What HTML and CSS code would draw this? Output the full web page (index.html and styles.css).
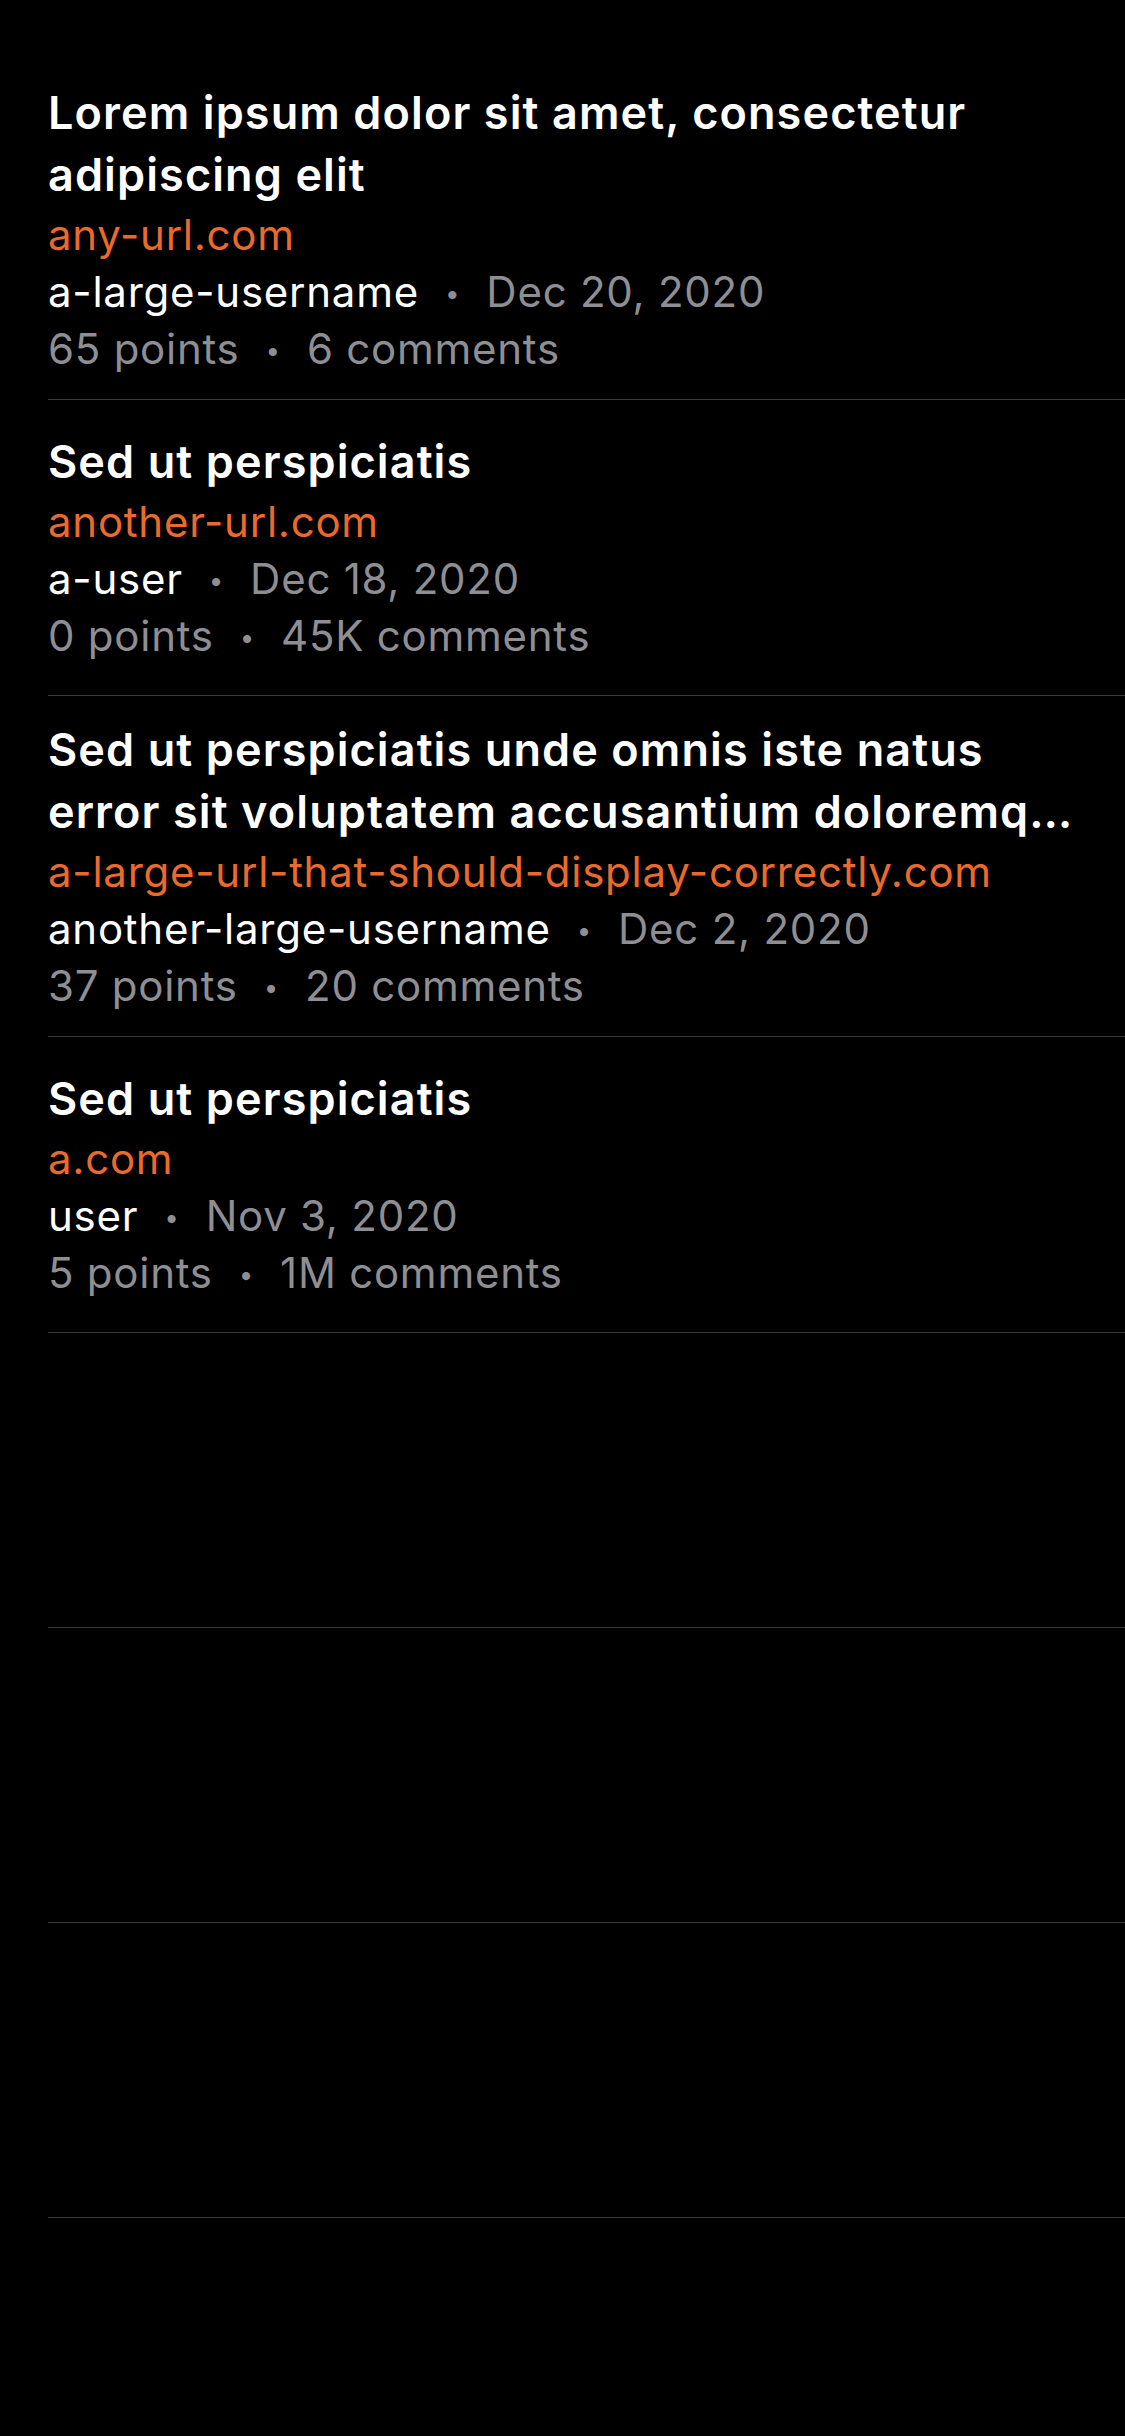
FILE: index.html
```html
<!DOCTYPE html>
<html lang="en">
<head>
<meta charset="utf-8">
<title>Stories</title>
<link rel="stylesheet" href="styles.css">
</head>
<body>
<main class="list">
  <article class="row">
    <h2 class="title">Lorem ipsum dolor sit amet, consectetur adipiscing elit</h2>
    <div class="url">any-url.com</div>
    <div class="meta"><span class="user">a-large-username</span><span class="dot">•</span><span class="muted">Dec 20, 2020</span></div>
    <div class="meta muted"><span>65 points</span><span class="dot">•</span><span>6 comments</span></div>
  </article>
  <article class="row">
    <h2 class="title">Sed ut perspiciatis</h2>
    <div class="url">another-url.com</div>
    <div class="meta"><span class="user">a-user</span><span class="dot">•</span><span class="muted">Dec 18, 2020</span></div>
    <div class="meta muted"><span>0 points</span><span class="dot">•</span><span>45K comments</span></div>
  </article>
  <article class="row">
    <h2 class="title clamp">Sed ut perspiciatis unde omnis iste natus error sit voluptatem accusantium doloremq…</h2>
    <div class="url">a-large-url-that-should-display-correctly.com</div>
    <div class="meta"><span class="user">another-large-username</span><span class="dot">•</span><span class="muted">Dec 2, 2020</span></div>
    <div class="meta muted"><span>37 points</span><span class="dot">•</span><span>20 comments</span></div>
  </article>
  <article class="row">
    <h2 class="title">Sed ut perspiciatis</h2>
    <div class="url">a.com</div>
    <div class="meta"><span class="user">user</span><span class="dot">•</span><span class="muted">Nov 3, 2020</span></div>
    <div class="meta muted"><span>5 points</span><span class="dot">•</span><span>1M comments</span></div>
  </article>
  <div class="row row-empty"></div>
  <div class="row row-empty"></div>
  <div class="row row-empty"></div>
</main>
</body>
</html>
```

FILE: styles.css
```css
html, body {
  margin: 0;
  padding: 0;
  background: #000;
}

body {
  font-family: Inter, "Noto Sans", "Liberation Sans", sans-serif;
  color: #fff;
  min-height: 2436px;
}

.list {
  padding-top: 59px;
  padding-left: 48px;
}

.row {
  box-sizing: border-box;
  min-height: 296px;
  padding: 22.5px 48px 22.5px 0;
  border-bottom: 1px solid #3a3a3c;
  display: flex;
  flex-direction: column;
  justify-content: center;
}

.row-empty {
  min-height: 295px;
  height: 295px;
}

.title {
  margin: 0;
  font-size: 45px;
  font-weight: 600;
  line-height: 62px;
  color: #fff;
  letter-spacing: 1.1px;
}

.clamp {
  display: -webkit-box;
  -webkit-line-clamp: 2;
  -webkit-box-orient: vertical;
  overflow: hidden;
}

.url {
  font-size: 42px;
  line-height: 57px;
  color: #ea6a2c;
  white-space: nowrap;
  letter-spacing: 0.75px;
}

.meta {
  font-size: 42px;
  line-height: 57px;
  white-space: nowrap;
  letter-spacing: 0.75px;
}

.user {
  color: #fff;
}

.muted {
  color: #8e8e93;
}

.dot {
  color: #8e8e93;
  font-size: 26px;
  line-height: 1;
  margin: 0 26px;
  vertical-align: 4px;
}
```
